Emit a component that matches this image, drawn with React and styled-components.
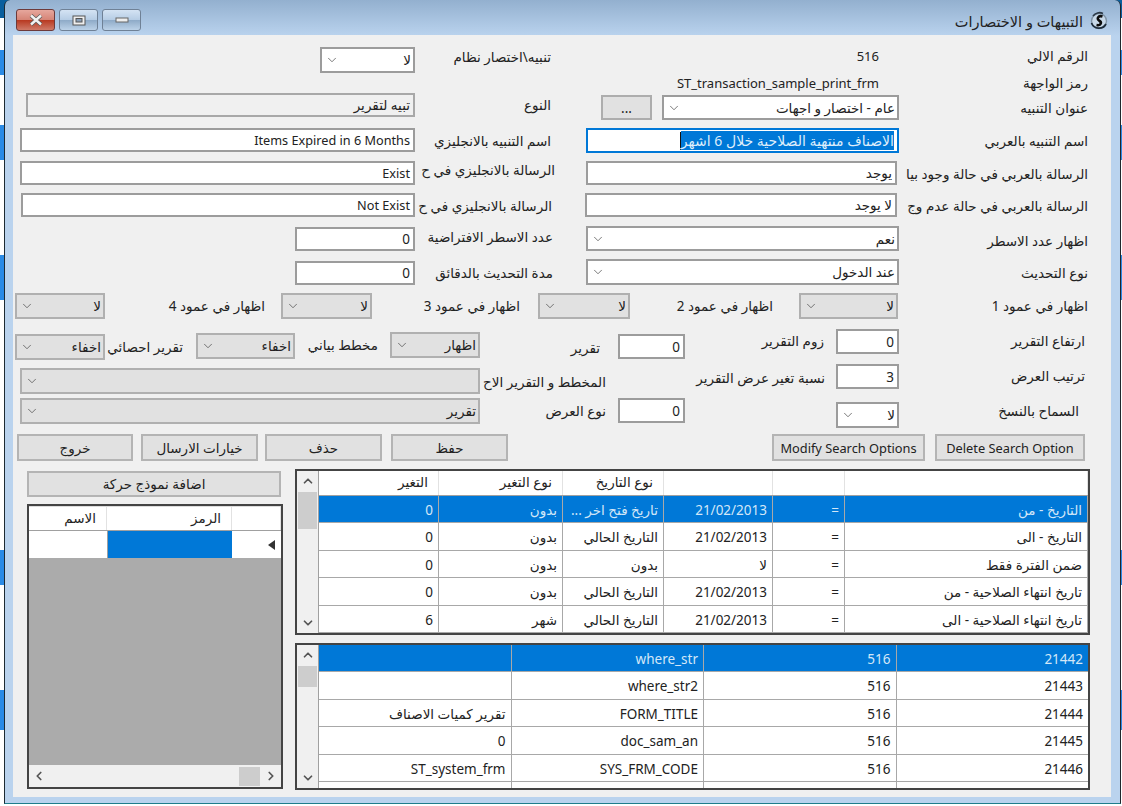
import React from 'react';
import styled, { createGlobalStyle } from 'styled-components';
import { ChevronDown, ChevronUp, ChevronLeft, ChevronRight } from 'lucide-react';

const topRows = [
  ['0', 'بدون', 'تاريخ فتح اخر ...', '21/02/2013', '=', 'التاريخ - من'],
  ['0', 'بدون', 'التاريخ الحالي', '21/02/2013', '=', 'التاريخ - الى'],
  ['0', 'بدون', 'بدون', 'لا', '=', 'ضمن الفترة فقط'],
  ['0', 'بدون', 'التاريخ الحالي', '21/02/2013', '=', 'تاريخ انتهاء الصلاحية - من'],
  ['6', 'شهر', 'التاريخ الحالي', '21/02/2013', '=', 'تاريخ انتهاء الصلاحية - الى'],
];

const bottomRows = [
  ['', 'where_str', '516', '21442'],
  ['', 'where_str2', '516', '21443'],
  ['تقرير كميات الاصناف', 'FORM_TITLE', '516', '21444'],
  ['0', 'doc_sam_an', '516', '21445'],
  ['ST_system_frm', 'SYS_FRM_CODE', '516', '21446'],
  ['', '', '', ''],
];

const Combo = ({ w, h = 26, ml, mt, off, children }) => (
  <SelectBox $w={w} $h={h} $ml={ml} $mt={mt} $off={off}>
    <ChevronDown size={14} strokeWidth={1.2} color="#444" />
    <span>{children}</span>
  </SelectBox>
);

const VScroll = ({ thumbTop, thumbH }) => (
  <ScrollY>
    <ScrollBtn><ChevronUp size={14} strokeWidth={3} color="#555" /></ScrollBtn>
    <ThumbY $top={thumbTop} $h={thumbH} />
    <ScrollBtn $end><ChevronDown size={14} strokeWidth={3} color="#555" /></ScrollBtn>
  </ScrollY>
);

const App = () => (
  <Desktop>
    <GlobalStyle />
    <Frame>
      <TitleBar>
        <WinButtons>
          <CloseBtn>
            <svg width="16" height="12" viewBox="0 0 16 12">
              <path d="M3 1.5 L13 10.5 M13 1.5 L3 10.5" stroke="#5a5a5a" strokeWidth="4" />
              <path d="M3 1.5 L13 10.5 M13 1.5 L3 10.5" stroke="#f2f2f2" strokeWidth="2.4" />
            </svg>
          </CloseBtn>
          <WinBtn>
            <svg width="14" height="11" viewBox="0 0 14 11">
              <rect x="1" y="1" width="12" height="9" fill="#eee" stroke="#555" />
              <rect x="4" y="3.5" width="6" height="3.5" fill="#8aa0b8" stroke="#555" />
            </svg>
          </WinBtn>
          <WinBtn>
            <svg width="14" height="6" viewBox="0 0 14 6">
              <rect x="1" y="1" width="12" height="4" fill="#eee" stroke="#666" />
            </svg>
          </WinBtn>
        </WinButtons>
        <TitleGroup>
          <Title>التبيهات و الاختصارات</Title>
          <svg width="18" height="20" viewBox="0 0 18 20">
            <circle cx="9" cy="10" r="7.5" fill="#c7d8e8" stroke="#7f93a6" strokeWidth="1.4" />
            <path d="M1.5 12 A8 8 0 0 0 16 13" fill="none" stroke="#1d2c3a" strokeWidth="1.8" />
            <path d="M3 5 A8 8 0 0 1 13 2.5" fill="none" stroke="#2b3947" strokeWidth="1.6" />
            <path d="M12.5 5.5 C8 4 6.5 8 9 9.5 C12 11 11.5 15 6.5 14" fill="none" stroke="#0c0c0c" strokeWidth="2.6" />
          </svg>
        </TitleGroup>
      </TitleBar>
      <Client>
        <Form>
          <Row $h={28}>
            <Combo w={95} ml={307} mt={1}>لا</Combo>
            <Label $w={136} $mt={2}>تنبيه\اختصار نظام</Label>
            <Plain $w={328} $mt={1}>516</Plain>
            <Label $w={209} $mt={1}>الرقم الالي</Label>
          </Row>
          <Row $h={18}>
            <Plain $w={866} $mt={0}>ST_transaction_sample_print_frm</Plain>
            <Label $w={209} $mt={0}>رمز الواجهة</Label>
          </Row>
          <Row $h={35}>
            <Input $ml={13} $w={389} $h={24} $mt={1} $off>تبيه لتقرير</Input>
            <Label $w={136} $mt={4}>النوع</Label>
            <MoreBtn>...</MoreBtn>
            <Combo w={237} h={25} ml={10} mt={3}>عام - اختصار و اجهات</Combo>
            <Label $w={189} $mt={7}>عنوان التنبيه</Label>
          </Row>
          <Row $h={33}>
            <Input $ml={7} $w={395} $mt={1} $latin>Items Expired in 6 Months</Input>
            <Label $w={136} $mt={5}>اسم التنبيه بالانجليزي</Label>
            <FocusInput $ml={35}>
              <Selected>الاصناف منتهية الصلاحية خلال 6 اشهر</Selected>
              <Caret />
            </FocusInput>
            <Label $w={189} $mt={5}>اسم التنبيه بالعربي</Label>
          </Row>
          <Row $h={32}>
            <Input $ml={7} $w={395} $mt={1} $latin>Exist</Input>
            <Label $w={140} $mt={1}>الرسالة بالانجليزي في ح</Label>
            <Input $ml={31} $w={311} $mt={1}>يوجد</Input>
            <Label $w={191} $mt={5}>الرسالة بالعربي في حالة وجود بيا</Label>
          </Row>
          <Row $h={33}>
            <Input $ml={8} $w={394} $mt={1} $latin>Not Exist</Input>
            <Label $w={137} $mt={5}>الرسالة بالانجليزي في ح</Label>
            <Input $ml={33} $w={312} $mt={1}>لا يوجد</Input>
            <Label $w={191} $mt={5}>الرسالة بالعربي في حالة عدم وج</Label>
          </Row>
          <Row $h={33}>
            <Input $ml={282} $w={120} $mt={2}>0</Input>
            <Label $w={138} $mt={3}>عدد الاسطر الافتراضية</Label>
            <Combo w={313} h={25} ml={33} mt={1}>نعم</Combo>
            <Label $w={189} $mt={7}>اظهار عدد الاسطر</Label>
          </Row>
          <Row $h={34}>
            <Input $ml={282} $w={120} $mt={3}>0</Input>
            <Label $w={138} $mt={6}>مدة التحديث بالدقائق</Label>
            <Combo w={313} ml={33} mt={1}>عند الدخول</Combo>
            <Label $w={189} $mt={6}>نوع التحديث</Label>
          </Row>
          <Row $h={36}>
            <Combo w={90} ml={2} mt={1} off>لا</Combo>
            <Label $w={160} $mt={5}>اظهار في عمود 4</Label>
            <Combo w={91} ml={16} mt={1} off>لا</Combo>
            <Label $w={148} $mt={5}>اظهار في عمود 3</Label>
            <Combo w={92} ml={18} mt={1} off>لا</Combo>
            <Label $w={143} $mt={5}>اظهار في عمود 2</Label>
            <Combo w={99} ml={26} mt={1} off>لا</Combo>
            <Label $w={190} $mt={5}>اظهار في عمود 1</Label>
          </Row>
          <Row $h={36}>
            <Combo w={90} ml={2} mt={6} off>اخفاء</Combo>
            <Label $w={78} $mt={10}>تقرير احصائي</Label>
            <Combo w={99} ml={13} mt={5} off>اخفاء</Combo>
            <Label $w={83} $mt={8}>مخطط بياني</Label>
            <Combo w={90} ml={12} mt={4} off>اظهار</Combo>
            <Label $w={120} $mt={11}>تقرير</Label>
            <Input $ml={18} $w={67} $h={25} $mt={6}>0</Input>
            <Label $w={139} $mt={4}>زوم التقرير</Label>
            <Input $ml={12} $w={63} $h={25} $mt={1}>0</Input>
            <Label $w={186} $mt={4}>ارتفاع التقرير</Label>
          </Row>
          <Row $h={32}>
            <Combo w={460} ml={7} mt={4} off></Combo>
            <Label $w={126} $mt={9}>المخطط و التقرير الاح</Label>
            <Label $w={219} $mt={5}>نسبة تغير عرض التقرير</Label>
            <Input $ml={11} $w={63} $h={25} $mt={0}>3</Input>
            <Label $w={186} $mt={3}>ترتيب العرض</Label>
          </Row>
          <Row $h={38}>
            <Combo w={460} ml={7} mt={2} off>تقرير</Combo>
            <Label $w={126} $mt={6}>نوع العرض</Label>
            <Input $ml={12} $w={67} $h={25} $mt={2}>0</Input>
            <Combo w={63} ml={151} mt={6}>لا</Combo>
            <Label $w={180} $mt={6}>السماح بالنسخ</Label>
          </Row>
          <Actions>
            <ActionBtn $w={116}>خروج</ActionBtn>
            <ActionBtn $w={117} $ml={8}>خيارات الارسال</ActionBtn>
            <ActionBtn $w={117} $ml={7}>حذف</ActionBtn>
            <ActionBtn $w={117} $ml={9}>حفظ</ActionBtn>
            <ActionBtn $w={153} $ml={264} $latin>Modify Search Options</ActionBtn>
            <ActionBtn $w={150} $ml={10} $latin>Delete Search Option</ActionBtn>
          </Actions>
        </Form>
        <Bottom>
          <LeftPane>
            <AddBtn>اضافة نموذج حركة</AddBtn>
            <SideGrid>
              <SideHead>
                <HeadCell>الاسم</HeadCell>
                <HeadCell>الرمز</HeadCell>
                <HeadCell />
              </SideHead>
              <SideRow>
                <span />
                <SideCurrent />
                <Indicator><Arrow /></Indicator>
              </SideRow>
              <GreyArea />
              <ScrollX>
                <ChevronLeft size={14} strokeWidth={3} color="#555" />
                <ThumbX />
                <ChevronRight size={14} strokeWidth={3} color="#555" />
              </ScrollX>
            </SideGrid>
          </LeftPane>
          <RightPane>
            <TableBox $h={166}>
              <VScroll thumbTop={1} thumbH={37} />
              <TableBody>
                <TopHead>
                  <HeadCell>التغير</HeadCell>
                  <HeadCell>نوع التغير</HeadCell>
                  <HeadCell>نوع التاريخ</HeadCell>
                  <HeadCell />
                  <HeadCell />
                  <HeadCell />
                </TopHead>
                {topRows.map((row, i) => (
                  <TopRow key={row[5]} $active={i === 0}>
                    {row.map((cell, j) => <Cell key={j}>{cell}</Cell>)}
                  </TopRow>
                ))}
              </TableBody>
            </TableBox>
            <TableBox $h={147}>
              <VScroll thumbTop={1} thumbH={21} />
              <TableBody>
                {bottomRows.map((row, i) => (
                  <BottomRow key={i} $active={i === 0}>
                    {row.map((cell, j) => <Cell key={j}>{cell}</Cell>)}
                  </BottomRow>
                ))}
              </TableBody>
            </TableBox>
          </RightPane>
        </Bottom>
      </Client>
    </Frame>
  </Desktop>
);

const GlobalStyle = createGlobalStyle`
  * { box-sizing: border-box; }
  html, body {
    margin: 0;
    width: 1122px;
    height: 806px;
    overflow: hidden;
    font-family: "Noto Sans", "DejaVu Sans", sans-serif;
    font-size: 13.5px;
    color: #222;
  }
`;

const Desktop = styled.div`
  width: 1122px;
  height: 806px;
  padding: 0 1px 2px 4px;
  background: linear-gradient(
    #0a5f9e 0, #0a5f9e 18px, #fff 18px, #fff 50px, #2b8be6 50px, #2b8be6 75px,
    #fff 75px, #fff 125px, #2b8be6 125px, #2b8be6 160px, #fff 160px, #fff 255px,
    #2b8be6 255px, #2b8be6 300px, #fff 300px, #fff 550px, #2b8be6 550px, #2b8be6 585px,
    #fff 585px, #fff 690px, #2b8be6 690px, #2b8be6 730px, #fff 730px
  );
`;

const Frame = styled.div`
  height: 804px;
  border-left: 1px solid #1c2a33;
  border-right: 1px solid #20262c;
  border-bottom: 1px solid #1f7d8c;
  border-radius: 6px 6px 0 0;
  background: linear-gradient(#93b0cf 0, #bad3ee 36px, #bad3ee 100%);
  padding: 0 9px 6px 8px;
`;

const TitleBar = styled.div`
  height: 35px;
  margin-left: -8px;
  margin-right: -9px;
  padding: 9px 12px 0 11px;
  display: flex;
  justify-content: space-between;
`;

const WinButtons = styled.div`
  display: flex;
  gap: 4px;
`;

const WinBtn = styled.div`
  width: 39px;
  height: 22px;
  border: 1px solid #6f8196;
  border-radius: 3px;
  display: flex;
  align-items: center;
  justify-content: center;
  background: linear-gradient(#d4e3f3 0, #b5cce4 50%, #8fabc8 52%, #bcd2e8 100%);
`;

const CloseBtn = styled(WinBtn)`
  border-color: #6d3a3a;
  background: linear-gradient(#e6a79d 0, #d58375 50%, #b83a22 52%, #cf7a68 100%);
`;

const TitleGroup = styled.div`
  display: flex;
  gap: 7px;
  align-items: center;
  height: 24px;
`;

const Title = styled.div`
  font-size: 14.5px;
  direction: rtl;
  color: #222;
`;

const Client = styled.div`
  height: 762px;
  background: #f0f0f0;
`;

const Form = styled.div`
  padding-top: 11px;
`;

const Row = styled.div`
  display: flex;
  align-items: flex-start;
  height: ${(p) => p.$h}px;
`;

const Label = styled.div`
  width: ${(p) => p.$w}px;
  height: 18px;
  margin-top: ${(p) => p.$mt || 0}px;
  line-height: 18px;
  flex: none;
  direction: rtl;
  white-space: nowrap;
  overflow: hidden;
  text-align: right;
`;

const Plain = styled(Label)`
  direction: ltr;
  font-size: 13px;
`;

const Input = styled.div`
  width: ${(p) => p.$w}px;
  height: ${(p) => p.$h || 24}px;
  margin-left: ${(p) => p.$ml || 0}px;
  margin-top: ${(p) => p.$mt || 0}px;
  flex: none;
  padding: 0 3px;
  border: 2px solid ${(p) => (p.$off ? '#a8a8a8' : '#9c9c9c')};
  background: ${(p) => (p.$off ? '#f0f0f0' : '#fff')};
  font-size: ${(p) => (p.$latin ? '12.7px' : 'inherit')};
  display: flex;
  align-items: center;
  justify-content: flex-end;
  direction: ltr;
  white-space: nowrap;
  position: relative;
`;

const FocusInput = styled(Input)`
  width: 313px;
  height: 25px;
  margin-top: 1px;
  border-color: #0078d7;
  font-size: 14px;
`;

const Selected = styled.span`
  background: #0078d7;
  color: #dfeefb;
  direction: rtl;
  line-height: 19px;
`;

const Caret = styled.span`
  order: -1;
  width: 1px;
  height: 18px;
  background: #111;
`;

const SelectBox = styled.div`
  width: ${(p) => p.$w}px;
  height: ${(p) => p.$h}px;
  margin-left: ${(p) => p.$ml || 0}px;
  margin-top: ${(p) => p.$mt || 0}px;
  flex: none;
  padding: 0 2px 0 3px;
  border: 2px solid ${(p) => (p.$off ? '#b0b0b0' : '#9c9c9c')};
  background: ${(p) => (p.$off ? '#e1e1e1' : '#fff')};
  display: flex;
  align-items: center;
  justify-content: space-between;
  white-space: nowrap;

  span {
    direction: rtl;
  }
`;

const MoreBtn = styled.div`
  width: 51px;
  height: 25px;
  margin-left: 50px;
  margin-top: 3px;
  flex: none;
  border: 2px solid #adadad;
  background: #e1e1e1;
  display: flex;
  align-items: center;
  justify-content: center;
`;

const Actions = styled.div`
  display: flex;
  padding-left: 4px;
  height: 27px;
`;

const ActionBtn = styled.div`
  width: ${(p) => p.$w}px;
  margin-left: ${(p) => p.$ml || 0}px;
  flex: none;
  border: 2px solid #b4b4b4;
  background: #e1e1e1;
  font-size: ${(p) => (p.$latin ? '12.8px' : 'inherit')};
  display: flex;
  align-items: center;
  justify-content: center;
  white-space: nowrap;
`;

const Bottom = styled.div`
  display: flex;
  gap: 12px;
  margin-top: 8px;
  padding-left: 14px;
`;

const LeftPane = styled.div`
  width: 256px;
  display: flex;
  flex-direction: column;
  gap: 7px;
  padding-top: 2px;
`;

const AddBtn = styled.div`
  width: 254px;
  height: 26px;
  border: 2px solid #b4b4b4;
  background: #e1e1e1;
  display: flex;
  align-items: center;
  justify-content: center;
  direction: rtl;
`;

const SideGrid = styled.div`
  height: 285px;
  border: 2px solid #444;
  display: flex;
  flex-direction: column;
`;

const sideColumns = 'grid-template-columns: 78px 125px 1fr;';

const SideHead = styled.div`
  display: grid;
  ${sideColumns}
  height: 25px;
  background: #fff;
  border-top: 1px solid #ddd;
  border-bottom: 1px solid #a0a0a0;
`;

const HeadCell = styled.div`
  padding-right: 10px;
  border-right: 1px solid #e2e2e2;
  direction: rtl;
  text-align: right;
  line-height: 23px;
  white-space: nowrap;
  overflow: hidden;
`;

const SideRow = styled.div`
  display: grid;
  ${sideColumns}
  height: 27px;
  background: #fff;
`;

const SideCurrent = styled.div`
  background: #0078d7;
  border-left: 1px solid #a0a0a0;
`;

const Indicator = styled.div`
  display: flex;
  align-items: center;
  justify-content: flex-end;
  padding-right: 6px;
`;

const Arrow = styled.div`
  width: 0;
  height: 0;
  border-top: 5px solid transparent;
  border-bottom: 5px solid transparent;
  border-right: 7px solid #333;
`;

const GreyArea = styled.div`
  flex: 1;
  background: #ababab;
`;

const ScrollX = styled.div`
  height: 22px;
  background: #f0f0f0;
  display: flex;
  align-items: center;
  padding: 0 3px;
`;

const ThumbX = styled.div`
  width: 21px;
  height: 19px;
  background: #cdcdcd;
  margin-left: auto;
  margin-right: 4px;
`;

const RightPane = styled.div`
  width: 795px;
  display: flex;
  flex-direction: column;
  gap: 8px;
`;

const TableBox = styled.div`
  height: ${(p) => p.$h}px;
  border: 2px solid #444;
  display: flex;
  overflow: hidden;
`;

const ScrollY = styled.div`
  width: 21px;
  flex: none;
  background: #f0f0f0;
  display: flex;
  flex-direction: column;
  align-items: center;
`;

const ScrollBtn = styled.div`
  height: 20px;
  flex: none;
  display: flex;
  align-items: center;
  justify-content: center;
  margin-top: ${(p) => (p.$end ? 'auto' : '0')};
`;

const ThumbY = styled.div`
  width: 19px;
  height: ${(p) => p.$h}px;
  margin-top: ${(p) => p.$top}px;
  background: #cdcdcd;
`;

const TableBody = styled.div`
  flex: 1;
  min-width: 0;
  background: #fff;
  border-left: 1px solid #a0a0a0;
`;

const topColumns = 'grid-template-columns: 120px 124px 101px 109px 72px 1fr;';

const TopHead = styled.div`
  display: grid;
  ${topColumns}
  height: 25px;
  border-bottom: 1px solid #a0a0a0;
`;

const Cell = styled.div`
  padding-right: 5px;
  border-right: 1px solid #a8a8a8;
  direction: rtl;
  text-align: right;
  white-space: nowrap;
  overflow: hidden;
  line-height: 28px;
`;

const DataRow = styled.div`
  display: grid;
  height: 27.4px;
  border-bottom: 1px solid #a8a8a8;
  background: ${(p) => (p.$active ? '#0078d7' : '#fff')};
  color: ${(p) => (p.$active ? '#d3e7f8' : '#222')};
`;

const TopRow = styled(DataRow)`
  ${topColumns}
`;

const BottomRow = styled(DataRow)`
  grid-template-columns: repeat(4, 192.5px);
`;

export default App;
